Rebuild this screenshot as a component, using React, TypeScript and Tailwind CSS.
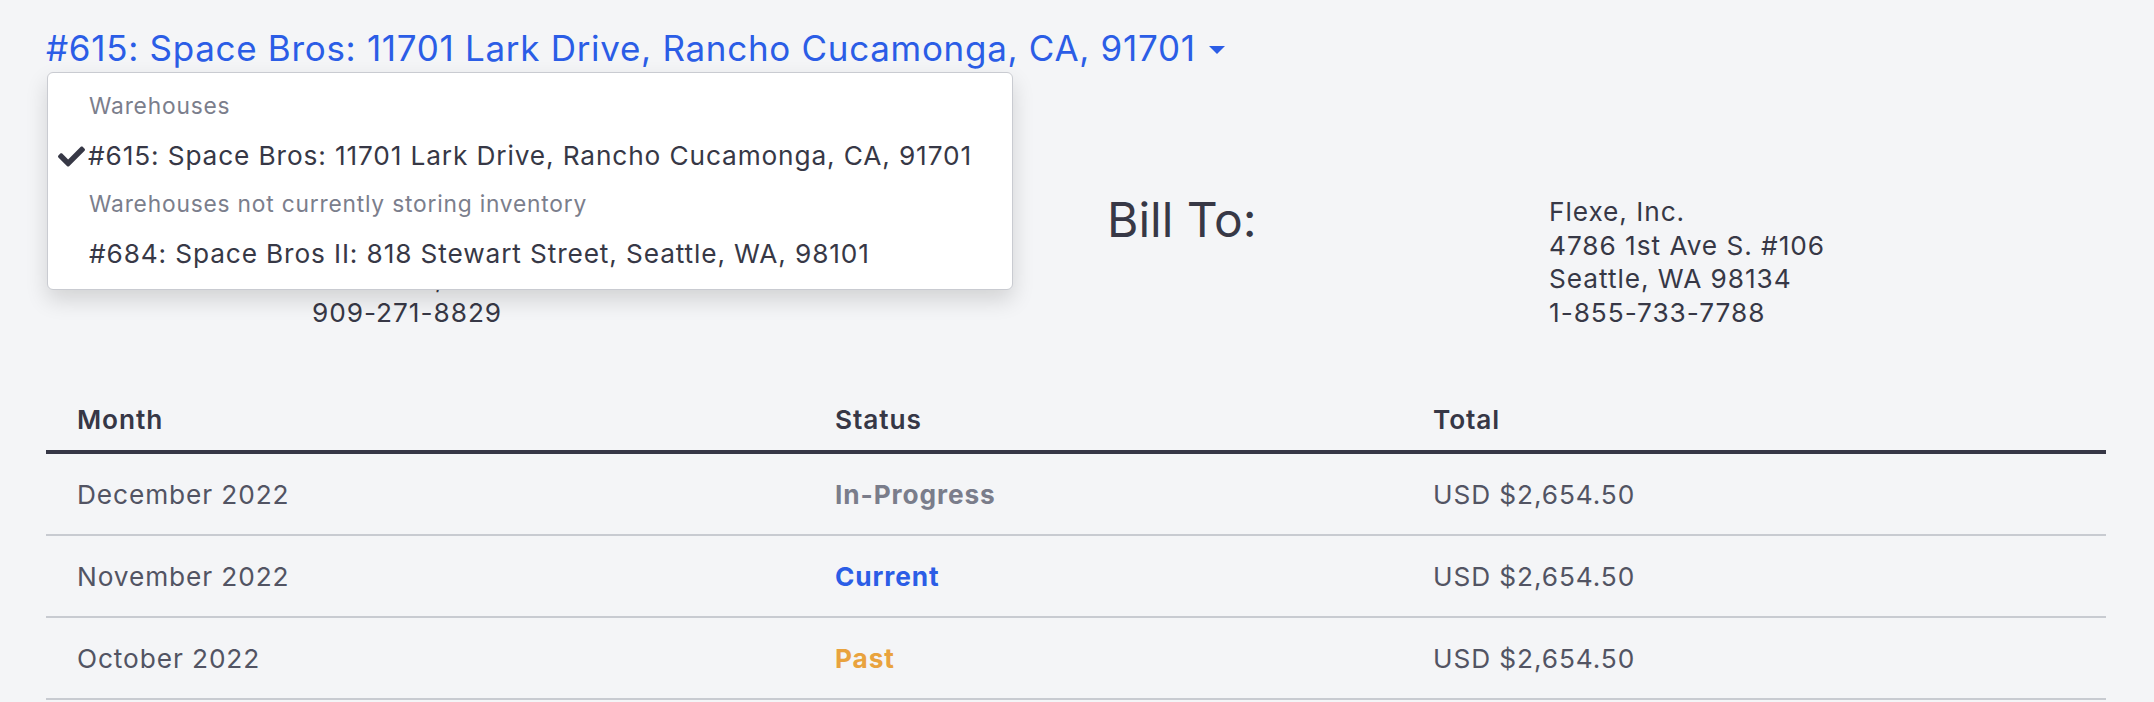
import { FaCheck } from 'react-icons/fa';

const rows = [
  { month: 'December 2022', status: 'In-Progress', tone: 'text-[#7a7d8b]', total: 'USD $2,654.50' },
  { month: 'November 2022', status: 'Current', tone: 'text-[#2b5de6]', total: 'USD $2,654.50' },
  { month: 'October 2022', status: 'Past', tone: 'text-[#e9a33e]', total: 'USD $2,654.50' },
];

function Address({ lines }: { lines: string[] }) {
  return (
    <div className="text-[26.25px] leading-[33.7px] tracking-[0.95px] text-[#373846]">
      {lines.map((line) => (
        <div key={line}>{line}</div>
      ))}
    </div>
  );
}

export default function App() {
  return (
    <div className="min-h-screen bg-[#f4f5f7] pl-[46px] pr-[48px] pt-[22px] font-['Inter',sans-serif] antialiased">
      {/* Warehouse picker */}
      <div className="relative">
        <button className="flex items-center gap-[13px] text-[35px] leading-[52px] tracking-[0.7px] text-[#2b5de6]">
          <span>#615: Space Bros: 11701 Lark Drive, Rancho Cucamonga, CA, 91701</span>
          <svg width="16" height="8" viewBox="0 0 16 8" className="mt-[4px]">
            <polygon points="0,0 16,0 8,8" fill="currentColor" />
          </svg>
        </button>

        <div className="absolute left-[1px] top-[50px] z-10 w-[966px] rounded-[6px] border border-[#c9cbd1] bg-white pt-[18px] pb-[3px] shadow-[0_10px_22px_rgba(0,0,0,0.14)]">
          <div className="pl-[41px] text-[22.75px] leading-[30px] tracking-[0.8px] text-[#7b7e8c]">Warehouses</div>
          <div className="flex items-center pl-[10px] pt-[17px] pb-[15px] text-[26.25px] leading-[36px] tracking-[0.87px] text-[#373846]">
            <FaCheck className="mr-[3px] h-[27px] w-[27px]" />
            <span>#615: Space Bros: 11701 Lark Drive, Rancho Cucamonga, CA, 91701</span>
          </div>
          <div className="pl-[41px] text-[22.75px] leading-[30px] tracking-[0.8px] text-[#7b7e8c]">
            Warehouses not currently storing inventory
          </div>
          <div className="pl-[41px] pt-[17px] pb-[14px] text-[26.25px] leading-[36px] tracking-[0.87px] text-[#373846]">
            #684: Space Bros II: 818 Stewart Street, Seattle, WA, 98101
          </div>
        </div>
      </div>

      {/* Remit / bill to */}
      <section className="mt-[121px] flex">
        <div className="w-[266px] text-[48px] leading-[49px] text-[#373846]">Remit To:</div>
        <div className="w-[795px]">
          <Address lines={['Space Bros', '11701 Lark Drive', 'Riverside, CA 92507', '909-271-8829']} />
        </div>
        <div className="w-[442px] text-[48px] leading-[49px] text-[#373846]">Bill To:</div>
        <Address lines={['Flexe, Inc.', '4786 1st Ave S. #106', 'Seattle, WA 98134', '1-855-733-7788']} />
      </section>

      {/* Statements */}
      <table className="mt-[72px] w-full table-fixed border-collapse text-left text-[26.25px] tracking-[0.9px]">
        <colgroup>
          <col className="w-[758px]" />
          <col className="w-[598px]" />
          <col />
        </colgroup>
        <thead>
          <tr className="border-b-4 border-[#363746]">
            <th className="px-[31px] pb-[12px] font-semibold leading-[36px] text-[#363746]">Month</th>
            <th className="px-[31px] pb-[12px] font-semibold leading-[36px] text-[#363746]">Status</th>
            <th className="px-[31px] pb-[12px] font-semibold leading-[36px] text-[#363746]">Total</th>
          </tr>
        </thead>
        <tbody>
          {rows.map((r) => (
            <tr key={r.month} className="border-b-2 border-[#c8cbd1]">
              <td className="px-[31px] pt-[23.5px] pb-[21px] leading-[35.5px] text-[#525463]">{r.month}</td>
              <td className={`px-[31px] pt-[23.5px] pb-[21px] font-bold leading-[35.5px] ${r.tone}`}>{r.status}</td>
              <td className="px-[31px] pt-[23.5px] pb-[21px] leading-[35.5px] text-[#525463]">{r.total}</td>
            </tr>
          ))}
        </tbody>
      </table>
    </div>
  );
}
